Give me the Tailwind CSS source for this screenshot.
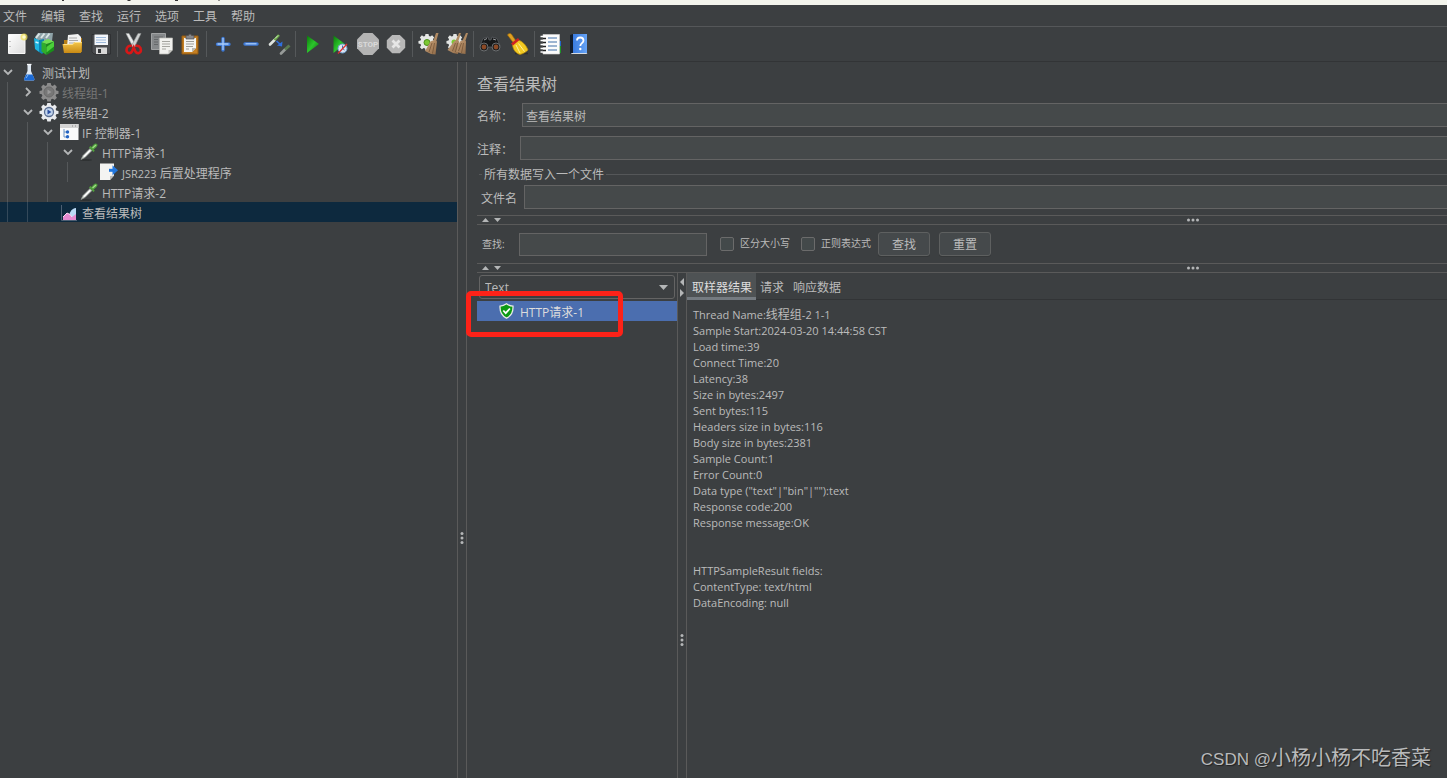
<!DOCTYPE html>
<html lang="zh-CN">
<head>
<meta charset="utf-8">
<meta name="viewport" content="width=device-width, initial-scale=1">
<title>JMeter</title>
<script src="https://cdn.jsdelivr.net/npm/@tailwindcss/browser@4"></script>
</head>
<body class="flex h-screen flex-col overflow-hidden bg-[#3c3f41] font-['Open_Sans','Noto_Sans_CJK_SC',sans-serif] text-xs text-[#bbbbbb]">

<!-- Shared gradients and shapes -->
<svg class="absolute h-0 w-0" aria-hidden="true">
  <defs>
    <linearGradient id="gold" x1="0" y1="0" x2="0" y2="1"><stop offset="0" stop-color="#f3c64b"/><stop offset="1" stop-color="#c98a14"/></linearGradient>
    <linearGradient id="paper" x1="0" y1="0" x2="1" y2="1"><stop offset="0" stop-color="#ffffff"/><stop offset="1" stop-color="#dcdcdc"/></linearGradient>
    <linearGradient id="play" x1="0" y1="0" x2="1" y2="1"><stop offset="0" stop-color="#0a7a0a"/><stop offset=".5" stop-color="#2cc42c"/><stop offset="1" stop-color="#0b6b0b"/></linearGradient>
    <linearGradient id="broom" x1="0" y1="0" x2="1" y2="1"><stop offset="0" stop-color="#c9a27a"/><stop offset="1" stop-color="#8f6a47"/></linearGradient>
    <linearGradient id="blue" x1="0" y1="0" x2="1" y2="0"><stop offset="0" stop-color="#3a7be0"/><stop offset="1" stop-color="#67a4f5"/></linearGradient>
    <symbol id="gear" viewBox="0 0 20 20">
      <path fill-rule="evenodd" d="M8.3 1h3.4l.5 2.3 1.5.6 2-1.3 2.2 2.3-1.3 2 .6 1.5 2.3.5v2.8l-2.3.5-.6 1.5 1.3 2-2.2 2.3-2-1.3-1.500.6-.5 2.200H8.300l-.5-2.200-1.500-.6-2 1.300-2.200-2.300 1.300-2-.6-1.500L.500 11.700V8.900l2.300-.5.6-1.500-1.300-2 2.200-2.300 2 1.300 1.500-.6z"/>
    </symbol>
    <symbol id="dropper" viewBox="0 0 20 20">
      <ellipse cx="7" cy="18" rx="6" ry="1" fill="#2f3233"/>
      <path d="M2 17.500 4 13.500 11 6.500 13 8.500 6 15.500z" fill="#d5dcd5" stroke="#8b918b" stroke-width=".7"/>
      <path d="m5 14.500 6-6" stroke="#fff" stroke-width="1.300"/>
      <path d="m10 5.500 4.500 4.500 1.300-1.300-1.200-1.300C17.500 5.500 19.500 3.500 18 2s-3.500 0-5.300 3l-1.300-1z" fill="#4f9e3c"/>
      <path d="m13.500 6 3.500-3" stroke="#a6dc8d" stroke-width="1.200"/>
    </symbol>
  </defs>
</svg>

<div class="h-[5px] shrink-0 bg-[#f3f4ec]" aria-hidden="true">
  <svg width="230" height="2" class="block"><path d="M62 .5h2M127.500 .5h3M175 .5h3M218.500 .5h1" stroke="#333" stroke-width="1"/></svg>
</div>

<nav class="flex h-[22px] shrink-0 items-center gap-3.5 border-b border-[#555759] pt-0.5 pl-[3px]" aria-label="菜单">
  <button>文件</button><button>编辑</button><button>查找</button><button>运行</button><button>选项</button><button>工具</button><button>帮助</button>
</nav>

<div role="toolbar" aria-label="工具栏" class="flex h-[35px] shrink-0 items-center border-b border-[#323436] pl-[3px]">
  <button aria-label="新建" class="flex w-7 justify-center"><svg class="size-6" viewBox="0 0 24 24"><path d="M3.500 2.500h16.500v19H3.500z" fill="url(#paper)" stroke="#f8f8f8"/><path d="M5 9v1M5 14v1" stroke="#999"/><circle cx="19" cy="5" r="3.500" fill="#f1e15a" opacity=".75"/><circle cx="19" cy="5" r="1.800" fill="#fffbd0"/></svg></button>
  <button aria-label="模板" class="flex w-7 justify-center"><svg class="size-6" viewBox="0 0 24 24"><path d="m2 5 3-4h15l-1 8H4z" fill="#8fa3a8"/><path d="m3 6 3.500-4.500M8 6l3.500-4.500M13 6l3.500-4.500" stroke="#dbe5e6" stroke-width="2"/><path d="m1 6 5 2v12l-4-3z" fill="#1fb4e0"/><path d="m6 8 5-1v13l-2 2-3-2z" fill="#0d84b4"/><path d="m2.500 10 3 1" stroke="#c7f2ff" stroke-width="1.500"/><path d="m8.500 10 5 2v11l-5-3.500z" fill="#2fae2c"/><path d="m13.500 12 7.500-2.500v9l-7.500 4.500z" fill="#1a8f1a"/><path d="m8.500 10 6.500-3 6 2.500-7.500 2.500z" fill="#6fe052"/><path d="m13.500 15 7.500-5.500v5l-7.500 6z" fill="#4ccf3a"/></svg></button>
  <button aria-label="打开" class="flex w-7 justify-center"><svg class="size-6" viewBox="0 0 24 24"><path d="M3 8h4l2-2h12v14H3z" fill="#b77f15"/><path d="m7 3 10-1 3 3v10H6z" fill="#f2f2f2"/><path d="M8 6h8M8 8.500h9M8 11h9" stroke="#a9a9a9"/><path d="m1.500 12 10 0 2-2h7.500L20 21H3z" fill="url(#gold)"/><path d="m2.500 12.500 9.300 0 2-2h6.700" stroke="#ffe18a" fill="none"/></svg></button>
  <button aria-label="保存" class="flex w-7 justify-center"><svg class="size-6" viewBox="0 0 24 24"><path d="M3 2.500h18.500V22H5l-2-2z" fill="#4b4d50" stroke="#2b2c2e" stroke-width=".8"/><path d="M5.500 2.500h13.500V13H5.500z" fill="#f3f6fa"/><path d="M7 5.500h10M7 8h10M7 10.500h10" stroke="#9fbbdc"/><path d="M7 15.500h11V22H7z" fill="#d8d8d8"/><path d="M9 17h3v4H9z" fill="#35373a"/></svg></button>
  <span class="mx-0.5 h-[26px] w-px bg-[#55585a]"></span>
  <button aria-label="剪切" class="flex w-7 justify-center"><svg class="size-6" viewBox="0 0 24 24"><path d="m4 1.500 3 0 7 12-2.500 2.500z" fill="#e8eaea" stroke="#9a9d9d" stroke-width=".6"/><path d="m19 1.500-3 0-6.500 12 2.500 2.500z" fill="#cfd2d2" stroke="#8f9292" stroke-width=".6"/><path d="M10 14c-3-1-5.500 1-5.500 4s3.500 4.500 5.500 1.500l1.700-4 1.700 4c2 3 5.500 1.500 5.500-1.500s-2.500-5-5.500-4" fill="none" stroke="#d81717" stroke-width="2.600"/></svg></button>
  <button aria-label="复制" class="flex w-7 justify-center"><svg class="size-6" viewBox="0 0 24 24"><path d="M1.500 1.500h14v16h-14z" fill="#85888a" stroke="#a0a2a3"/><path d="M4 5h9M4 7.500h4M4 10h4M4 12.500h4" stroke="#646769"/><path d="M9.500 6h13v12l-4 4h-9z" fill="#f1f1ee" stroke="#b9b9b6" stroke-width=".7"/><path d="M12 9.500h8M12 12h8M12 14.500h8M12 17h4" stroke="#a5a5a0"/><path d="m22.500 18-4 4v-4z" fill="#c4c4bf"/></svg></button>
  <button aria-label="粘贴" class="flex w-7 justify-center"><svg class="size-6" viewBox="0 0 24 24"><path d="M4 4h16v18H4z" fill="#c47f22" stroke="#935a10"/><path d="M6 6h12v10l-4 4H6z" fill="#f4f4f1"/><path d="M8 9.500h8M8 12h8M8 14.500h7M8 17h3" stroke="#9d9d98"/><path d="m18 16-4 4v-4z" fill="#b9b9b4"/><path d="M8 3.500h2.500a1.500 1.500 0 0 1 3 0H16V7H8z" fill="#85868a" stroke="#4d4e50" stroke-width=".7"/></svg></button>
  <span class="mx-0.5 h-[26px] w-px bg-[#55585a]"></span>
  <button aria-label="展开" class="flex w-7 justify-center"><svg class="size-6" viewBox="0 0 24 24"><path d="M12 6.500v11.500M6.500 12.200h11.500" stroke="#3f7ad6" stroke-width="3.400" stroke-linecap="round"/><path d="M12 6v12M6.500 12h11" stroke="#a9cbf8" stroke-width="1.300"/></svg></button>
  <button aria-label="折叠" class="flex w-7 justify-center"><svg class="size-6" viewBox="0 0 24 24"><path d="M6 12h12" stroke="#3f7ad6" stroke-width="3.400" stroke-linecap="round"/><path d="M6.500 11.800h11" stroke="#a9cbf8" stroke-width="1.300"/></svg></button>
  <button aria-label="切换" class="flex w-7 justify-center"><svg class="size-6" viewBox="0 0 24 24"><path d="m3 12.500 4.500-4.500" stroke="#dfe4df" stroke-width="2.600" stroke-linecap="round"/><path d="m7.500 8 4.500-5" stroke="#6aa848" stroke-width="2.600"/><path d="m8 6.500 3-3" stroke="#d8efcc"/><path d="m9.500 9 4.500 4" stroke="#2f6fe0" stroke-width="1.500"/><path d="m15.500 9.500-.5 5-5-1z" fill="#2f6fe0"/><g opacity=".65"><path d="m14 21.500 4-4" stroke="#c9cdc9" stroke-width="2.600" stroke-linecap="round"/><path d="m18 17.500 4.500-4" stroke="#6d9c58" stroke-width="3"/></g></svg></button>
  <span class="mx-0.5 h-[26px] w-px bg-[#55585a]"></span>
  <button aria-label="启动" class="flex w-7 justify-center"><svg class="size-6" viewBox="0 0 24 24"><path d="M7 3.500 19 12 7 21z" fill="url(#play)"/></svg></button>
  <button aria-label="不停顿开始" class="flex w-7 justify-center"><svg class="size-6" viewBox="0 0 24 24"><path d="M5.500 3.500 17 12 5.500 21z" fill="url(#play)"/><circle cx="14.500" cy="16.500" r="4.500" fill="#dbe6f2" stroke="#6fa0d0"/><path d="M14.500 13.500v3l2 1.500" stroke="#3c74b3" fill="none"/><path d="m10 21.500 9-9.500" stroke="#d93030" stroke-width="1.300"/></svg></button>
  <button aria-label="停止" class="flex w-7 justify-center"><svg class="size-6" viewBox="0 0 24 24"><path d="M7.500 1h9L23 7.500v8.800L16.500 23h-9L1 16.300V7.500z" fill="#b4b4b4"/><text x="12" y="15" text-anchor="middle" font-family="Roboto" font-size="8" font-weight="700" fill="#dadada">STOP</text></svg></button>
  <button aria-label="关闭" class="flex w-7 justify-center"><svg class="size-6" viewBox="0 0 24 24"><path d="M8.200 3h7.600l5.400 5.200v7.600L15.800 21.300H8.200L2.800 15.800V8.200z" fill="#b8b8b8"/><path d="m8.500 8.500 7 7m0-7-7 7" stroke="#e6e6e6" stroke-width="2.800"/></svg></button>
  <span class="mx-0.5 h-[26px] w-px bg-[#55585a]"></span>
  <button aria-label="清除" class="flex w-7 justify-center"><svg class="size-6" viewBox="0 0 24 24"><use href="#gear" x="1" y="1" width="18" height="18" fill="#e6e8e6"/><circle cx="10" cy="10.500" r="3" fill="#7cc832" stroke="#4d8f1a"/><path d="m19 1 2.500 0-2.500 9-3 0z" fill="#b08a62"/><path d="M13.500 9.500c2-1.500 5-1 6.500 0l-1.500 13-4.500-.5-6-3z" fill="url(#broom)"/><path d="m15 11-3 9M17.500 11l-2 10.500" stroke="#6f4f32" stroke-width=".7"/></svg></button>
  <button aria-label="清除全部" class="flex w-7 justify-center"><svg class="size-6" viewBox="0 0 24 24"><use href="#gear" x="1" y="1" width="18" height="18" fill="#e2e4e2"/><circle cx="9" cy="10" r="2.500" fill="#7cc832"/><path d="m14 1 2 0-3 9-3 0zM21 1l2 0-3 9-3 0z" fill="#b08a62"/><path d="M9 9.500c1.500-1.500 4-1 5 0L13 22l-5-1-5.500-3z" fill="url(#broom)"/><path d="M15 9.500c2-1.500 5-1 6 0L20.500 22l-4-.5-6-2z" fill="url(#broom)"/><path d="m10.500 11-3 8M12.500 11l-2 9M16.500 11l-3 8M18.500 11l-2 10" stroke="#6f4f32" stroke-width=".7"/></svg></button>
  <span class="mx-0.5 h-[26px] w-px bg-[#55585a]"></span>
  <button aria-label="搜索" class="flex w-7 justify-center"><svg class="size-6" viewBox="0 0 24 24"><path d="M5 6.500 10 5l1 3h2l1-3 5 1.500 3 7-5 5-4-3.500h-2L7 18.500l-5-5z" fill="#17191a" stroke="#5e6265" stroke-width=".7"/><circle cx="6" cy="15" r="4" fill="#1b1c1d" stroke="#6a6d6f"/><circle cx="6" cy="15" r="2.400" fill="#8c4a26"/><circle cx="18" cy="15" r="4" fill="#1b1c1d" stroke="#6a6d6f"/><circle cx="18" cy="15" r="2.400" fill="#8c4a26"/><path d="m6 8 3-1.500M15 7l3 1" stroke="#9a9da0"/></svg></button>
  <button aria-label="重置搜索" class="flex w-7 justify-center"><svg class="size-6" viewBox="0 0 24 24"><path d="M9 21.500h13" stroke="#2b2d2f" stroke-width="1.500"/><path d="M1.500 3c1-2 3.500-2 4.500 0l4 6-2.500 2z" fill="#e0a021" stroke="#9c6a0c" stroke-width=".7"/><path d="m6.500 12 6-4c5 2 8 6 9.500 10-2 2-5 4-8 4.500-4-1-7.500-5-7.500-10.500z" fill="#f2c921" stroke="#b88a0a" stroke-width=".7"/><path d="m10 13 4 8M12.500 11.500l6 8" stroke="#fff09a"/><path d="m5 11.500 7-5.500 1.500 2L7 13.500z" fill="#cf2222"/></svg></button>
  <span class="mx-0.5 h-[26px] w-px bg-[#55585a]"></span>
  <button aria-label="函数助手" class="flex w-7 justify-center"><svg class="size-6" viewBox="0 0 24 24"><path d="M19 9h3v5h-3z" fill="#2467c9"/><path d="M19 14h3v7h-3z" fill="#1d9427"/><path d="M4 2.500h16.500V22H4z" fill="#fbfbfb" stroke="#d5d5d5" stroke-width=".6"/><path d="M1.500 4.500h5M1.500 8.500h5M1.500 12.500h5M1.500 16.500h5M1.500 20h5" stroke="#fff" stroke-width="1.500"/><path d="M3.500 6.500h3.500M3.500 10.500h3.500M3.500 14.500h3.500M3.500 18.500h3.500" stroke="#222" stroke-width="1.500"/><path d="M9 6h9M9 10h9M9 14h9M9 18h9" stroke="#3f6fa8" stroke-width="1.200"/></svg></button>
  <button aria-label="帮助" class="flex w-7 justify-center"><svg class="size-6" viewBox="0 0 24 24"><path d="m3 3 3-1v19l-3 1z" fill="#111c2e"/><path d="M6 2h14v19H6z" fill="url(#blue)"/><path d="M3.500 22h16l1-1H5z" fill="#d7dbe0"/><path d="M10 8.500c0-4 6.500-4 6.500 0 0 2.700-3.200 2.500-3.200 5.500" stroke="#fff" stroke-width="1.800" fill="none"/><circle cx="13.300" cy="17" r="1.200" fill="#fff"/></svg></button>
</div>

<div class="flex min-h-0 grow">
  <!-- Test plan tree -->
  <aside class="w-[457px] shrink-0 overflow-hidden">
    <ul role="tree" aria-label="测试计划">
      <li role="treeitem" class="flex h-5 items-center">
        <button aria-label="折叠" class="flex w-4 justify-center"><svg class="size-2.5" viewBox="0 0 10 10"><path d="m1 3 4 4 4-4" fill="none" stroke="#b4b6b7" stroke-width="1.800"/></svg></button>
        <svg class="mr-[3px] ml-[3px] size-5" viewBox="0 0 20 20"><path d="M8.500 2.500h3.500v6.500l3.200 7.500c.5 1.500 0 2-1.200 2H6.500c-1.200 0-1.700-.5-1.200-2L8.500 9z" fill="#dfe9f3"/><path d="m7 12.500 6.500 0 1.800 4c.5 1.500 0 2-1.300 2H6.500c-1.300 0-1.700-.5-1.200-2z" fill="#1c6ad4"/><path d="M8 2.500h4.500" stroke="#f5f8fa" stroke-width="1.300"/><path d="m9 13-2 3" stroke="#86bbf5"/></svg>
        <span class="pt-1">测试计划</span>
      </li>
      <li role="treeitem" class="flex h-5 items-center">
        <span class="flex h-full w-5 pl-[7px]"><i class="w-px bg-[#55585a]"></i></span>
        <button aria-label="展开" class="flex w-4 justify-center"><svg class="size-2.5" viewBox="0 0 10 10"><path d="m3 1 4 4-4 4" fill="none" stroke="#b4b6b7" stroke-width="1.800"/></svg></button>
        <svg class="mr-[3px] ml-[3px] size-5" viewBox="0 0 20 20"><use href="#gear" width="20" height="20" fill="#8c8c8c"/><circle cx="10" cy="10" r="5" fill="#777" stroke="#6a6a6a"/><path d="m8.500 7.500 4 2.500-4 2.500z" fill="#9a9a9a"/></svg>
        <span class="pt-1 text-[#777777]">线程组-1</span>
      </li>
      <li role="treeitem" class="flex h-5 items-center">
        <span class="flex h-full w-5 pl-[7px]"><i class="w-px bg-[#55585a]"></i></span>
        <button aria-label="折叠" class="flex w-4 justify-center"><svg class="size-2.5" viewBox="0 0 10 10"><path d="m1 3 4 4 4-4" fill="none" stroke="#b4b6b7" stroke-width="1.800"/></svg></button>
        <svg class="mr-[3px] ml-[3px] size-5" viewBox="0 0 20 20"><use href="#gear" width="20" height="20" fill="#e9ebee"/><circle cx="10" cy="10" r="4.500" fill="#c4d6ee" stroke="#5b6f93" stroke-width="1.300"/><path d="m8.500 7.500 4 2.500-4 2.500z" fill="#2b4fa0"/></svg>
        <span class="pt-1">线程组-2</span>
      </li>
      <li role="treeitem" class="flex h-5 items-center">
        <span class="flex h-full w-5 pl-[7px]"><i class="w-px bg-[#55585a]"></i></span>
        <span class="flex h-full w-5 pl-[7px]"><i class="w-px bg-[#55585a]"></i></span>
        <button aria-label="折叠" class="flex w-4 justify-center"><svg class="size-2.5" viewBox="0 0 10 10"><path d="m1 3 4 4 4-4" fill="none" stroke="#b4b6b7" stroke-width="1.800"/></svg></button>
        <svg class="mr-[3px] ml-[3px] size-5" viewBox="0 0 20 20"><path d="M1 2h18.500v16H1z" fill="#fafafa"/><path d="M1 2h18.500v4H1z" fill="#d4d4d4"/><path d="M13 4h1M16 4h1" stroke="#888"/><path d="M5 7v8h3M5 10h3" stroke="#6d94c4" fill="none"/><circle cx="8.500" cy="10" r="1.700" fill="#2464c4"/><circle cx="8.500" cy="14.700" r="1.700" fill="#2464c4"/></svg>
        <span class="pt-1">IF 控制器-1</span>
      </li>
      <li role="treeitem" class="flex h-5 items-center">
        <span class="flex h-full w-5 pl-[7px]"><i class="w-px bg-[#55585a]"></i></span>
        <span class="flex h-full w-5 pl-[7px]"><i class="w-px bg-[#55585a]"></i></span>
        <span class="flex h-full w-5 pl-[7px]"><i class="w-px bg-[#55585a]"></i></span>
        <button aria-label="折叠" class="flex w-4 justify-center"><svg class="size-2.5" viewBox="0 0 10 10"><path d="m1 3 4 4 4-4" fill="none" stroke="#b4b6b7" stroke-width="1.800"/></svg></button>
        <svg class="mr-[3px] ml-[3px] size-5" viewBox="0 0 20 20"><use href="#dropper" width="20" height="20"/></svg>
        <span class="pt-1">HTTP请求-1</span>
      </li>
      <li role="treeitem" class="flex h-5 items-center">
        <span class="flex h-full w-5 pl-[7px]"><i class="w-px bg-[#55585a]"></i></span>
        <span class="flex h-full w-5 pl-[7px]"><i class="w-px bg-[#55585a]"></i></span>
        <span class="flex h-full w-5 pl-[7px]"><i class="w-px bg-[#55585a]"></i></span>
        <span class="flex h-full w-5 pl-[7px]"><i class="w-px bg-[#55585a]"></i></span>
        <svg class="mr-[3px] ml-[19px] size-5" viewBox="0 0 20 20"><path d="M1 1.500h14v12l-4 4.500H1z" fill="#f4f4f2"/><path d="m15 13.500-4 4.500v-4z" fill="#bcbcb8"/><path d="M10 8.300h5" stroke="#2277dd" stroke-width="3"/><path d="m13.500 3.300 5.500 5-5.500 5z" fill="#2277dd"/></svg>
        <span class="pt-1"><span class="text-[11px]">JSR223</span> 后置处理程序</span>
      </li>
      <li role="treeitem" class="flex h-5 items-center">
        <span class="flex h-full w-5 pl-[7px]"><i class="w-px bg-[#55585a]"></i></span>
        <span class="flex h-full w-5 pl-[7px]"><i class="w-px bg-[#55585a]"></i></span>
        <span class="flex h-full w-5 pl-[7px]"><i class="w-px bg-[#55585a]"></i></span>
        <svg class="mr-[3px] ml-[19px] size-5" viewBox="0 0 20 20"><use href="#dropper" width="20" height="20"/></svg>
        <span class="pt-1">HTTP请求-2</span>
      </li>
      <li role="treeitem" aria-selected="true" class="flex h-5 items-center bg-[#0d293e]">
        <span class="flex h-full w-5 pl-[7px]"><i class="w-px bg-[#34495a]"></i></span>
        <span class="flex h-full w-5 pl-[7px]"><i class="w-px bg-[#34495a]"></i></span>
        <svg class="mr-[3px] ml-[19px] size-5" viewBox="0 0 20 20"><path d="M2.500 3v15.500H18" stroke="#4d5f73" fill="none"/><path d="M10 14c1-5 3-7.500 7-8v12H10z" fill="#b9d9f5"/><path d="M4 18v-3l4-4 3 1.500 2 2.500 4-3v6z" fill="#e58ad0"/><path d="m4 15 4-4 3 1.500 2 2.500" stroke="#fbd9f2" fill="none"/></svg>
        <span class="pt-1">查看结果树</span>
      </li>
    </ul>
  </aside>

  <div role="separator" aria-orientation="vertical" class="flex w-2.5 shrink-0 justify-center border-x border-[#5a5a5a] pt-[470px]">
    <svg width="4" height="12" viewBox="0 0 4 12" fill="#b4b6b7"><circle cx="2" cy="1.500" r="1.500"/><circle cx="2" cy="6" r="1.500"/><circle cx="2" cy="10.500" r="1.500"/></svg>
  </div>

  <main class="relative flex min-w-0 grow flex-col pl-2.5">
    <h1 class="mt-3 mb-[9px] text-base leading-5">查看结果树</h1>
    <div class="mb-[9px] flex h-6 items-center">
      <label for="name" class="w-[45px] pt-[3px]">名称：</label>
      <input id="name" value="查看结果树" class="h-6 grow border border-r-0 border-[#646464] bg-[#45494a] px-[3px] pt-0.5 outline-none">
    </div>
    <div class="flex h-6 items-center">
      <label for="comment" class="w-[43px] pt-[3px]">注释：</label>
      <input id="comment" class="h-6 grow border border-r-0 border-[#646464] bg-[#45494a] px-[3px] pt-0.5 outline-none">
    </div>
    <section aria-labelledby="filegroup" class="pl-0.5">
      <div class="mt-1 flex h-5 items-center gap-0.5"><i class="h-px w-[3px] bg-[#555759]"></i><h2 id="filegroup" class="pt-0.5">所有数据写入一个文件</h2><i class="h-px grow bg-[#555759]"></i></div>
      <div class="mt-px flex h-6 items-center pl-0.5">
        <label for="file" class="w-[43px] pt-[3px]">文件名</label>
        <input id="file" class="h-6 grow border border-r-0 border-[#646464] bg-[#45494a] px-[3px] pt-0.5 outline-none">
      </div>
    </section>
    <div role="separator" class="mt-1.5 flex h-2.5 shrink-0 items-center border-y border-[#5a5a5a]">
      <svg width="26" height="6" viewBox="0 0 26 6" class="shrink-0" fill="#b4b6b7"><path d="M5 5 8.500 1 12 5zM17 1h7l-3.500 4z"/></svg>
      <svg width="12" height="4" viewBox="0 0 12 4" class="ml-[70.5%]" fill="#b4b6b7"><circle cx="1.500" cy="2" r="1.500"/><circle cx="6" cy="2" r="1.500"/><circle cx="10.500" cy="2" r="1.500"/></svg>
    </div>
    <div class="flex h-[38px] shrink-0 items-center pl-[5px] text-[10px]">
      <label for="search" class="w-[37px] pt-0.5">查找:</label>
      <input id="search" class="h-[23px] w-[188px] border border-[#646464] bg-[#45494a] px-[3px] text-xs outline-none">
      <label class="ml-[13px] flex items-center gap-1.5"><input type="checkbox" class="size-3.5 appearance-none rounded-xs border border-[#6b6b6b] bg-[#43494a]">区分大小写</label>
      <label class="ml-[11px] flex items-center gap-1.5"><input type="checkbox" class="size-3.5 appearance-none rounded-xs border border-[#6b6b6b] bg-[#43494a]">正则表达式</label>
      <button class="ml-[7px] h-6 w-[52px] rounded-[3px] border border-[#5e6060] bg-[#45494b] pt-0.5 text-xs shadow-[0_1px_0_#353839]">查找</button>
      <button class="ml-[9px] h-6 w-[52px] rounded-[3px] border border-[#5e6060] bg-[#45494b] pt-0.5 text-xs shadow-[0_1px_0_#353839]">重置</button>
    </div>
    <div role="separator" class="flex h-2.5 shrink-0 items-center border-y border-[#5a5a5a]">
      <svg width="26" height="6" viewBox="0 0 26 6" class="shrink-0" fill="#b4b6b7"><path d="M5 5 8.500 1 12 5zM17 1h7l-3.500 4z"/></svg>
      <svg width="12" height="4" viewBox="0 0 12 4" class="ml-[70.5%]" fill="#b4b6b7"><circle cx="1.500" cy="2" r="1.500"/><circle cx="6" cy="2" r="1.500"/><circle cx="10.500" cy="2" r="1.500"/></svg>
    </div>

    <div class="flex min-h-0 grow">
      <section aria-label="结果列表" class="relative w-[200px] shrink-0">
        <div class="relative mx-0.5 mt-0.5">
          <select aria-label="渲染方式" class="block h-6 w-full appearance-none rounded-[3px] border border-[#646464] bg-[#3c3f41] px-[5px] pt-0.5 outline-none"><option>Text</option></select>
          <svg width="9" height="5" viewBox="0 0 9 5" class="pointer-events-none absolute top-2.5 right-[7px]"><path d="M0 0h9L4.500 5z" fill="#b4b6b7"/></svg>
        </div>
        <ul class="mt-0.5">
          <li class="flex h-5 items-center gap-1.5 bg-[#4b6eaf] pl-[22px] text-[#dddddd]">
            <svg width="15" height="16" viewBox="0 0 15 16"><path d="M7.500.8C9.500 2.200 11.500 3 14 3.200c.3 5.500-1.500 9.500-6.500 12C2.500 12.700.7 8.700 1 3.200 3.500 3 5.500 2.200 7.500.8z" fill="#0c9a12" stroke="#e6ebe4" stroke-width="1.300"/><path d="m4.300 7.500 2.400 2.600 4.200-4.600" fill="none" stroke="#fff" stroke-width="1.800"/></svg>
            <span class="pt-[3px]">HTTP请求-1</span>
          </li>
        </ul>
        <div class="pointer-events-none absolute top-[18px] -left-[11px] h-[46px] w-[157px] rounded-[5px] border-[5px] border-[#fd2218]"></div>
      </section>
      <div role="separator" aria-orientation="vertical" class="flex w-2.5 shrink-0 flex-col items-center border-x border-[#5a5a5a] pt-[5px]">
        <svg width="6" height="20" viewBox="0 0 6 20" fill="#b4b6b7"><path d="M5 0v8L1 4zM1 11l4 4-4 4z"/></svg>
        <svg width="4" height="12" viewBox="0 0 4 12" class="mt-[336px]" fill="#b4b6b7"><circle cx="2" cy="1.500" r="1.500"/><circle cx="2" cy="6" r="1.500"/><circle cx="2" cy="10.500" r="1.500"/></svg>
      </div>
      <section class="min-w-0 grow">
        <div role="tablist" class="flex h-[27px] border-b border-[#323436]">
          <button role="tab" aria-selected="true" class="-mb-px border-b-3 border-[#747a80] bg-[#4e5254] pt-[5px] pr-1 pl-[5px] text-[#dddddd]">取样器结果</button>
          <button role="tab" class="px-1 pt-1">请求</button>
          <button role="tab" class="px-[5px] pt-1">响应数据</button>
        </div>
        <pre class="pt-[7px] pl-1.5 font-['Open_Sans','Noto_Sans_CJK_SC',sans-serif] text-[11px] leading-4">Thread Name:<span class="text-xs leading-none">线程组</span>-2 1-1
Sample Start:2024-03-20 14:44:58 CST
Load time:39
Connect Time:20
Latency:38
Size in bytes:2497
Sent bytes:115
Headers size in bytes:116
Body size in bytes:2381
Sample Count:1
Error Count:0
Data type ("text"|"bin"|""):text
Response code:200
Response message:OK


HTTPSampleResult fields:
ContentType: text/html
DataEncoding: null</pre>
      </section>
    </div>
    <p class="absolute right-4 bottom-1 font-['Liberation_Sans','Noto_Sans_CJK_SC',sans-serif] text-xl leading-7 text-[#b9babb] [text-shadow:1px_1px_1px_#222]"><span class="text-[17px]">CSDN @</span>小杨小杨不吃香菜</p>
  </main>
</div>
</body>
</html>
